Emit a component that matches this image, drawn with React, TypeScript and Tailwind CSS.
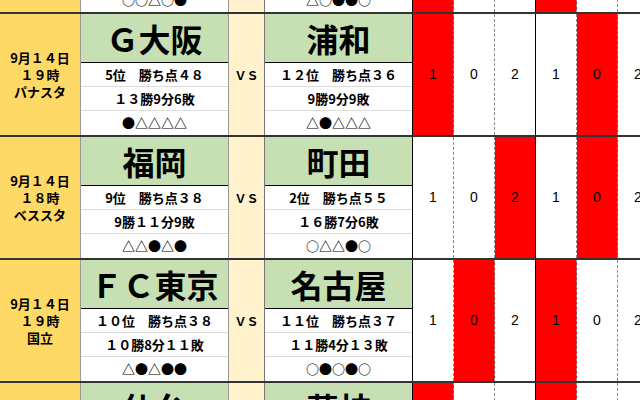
import React from 'react';

type Team = {
  name: string;
  rank: string;
  record: string;
  form: string;
};

type Match = {
  date: string[];
  home: Team;
  away: Team;
  reds: number[];
  scores: boolean;
};

const SCORES = ['1', '0', '2', '1', '0', '2'];

const MATCHES: Match[] = [
  {
    // only the last line of this row is still on screen
    date: [],
    home: { name: '', rank: '', record: '', form: '○○△○●' },
    away: { name: '', rank: '', record: '', form: '△○●●○' },
    reds: [0, 3],
    scores: false,
  },
  {
    date: ['9月１４日', '１９時', 'パナスタ'],
    home: { name: 'Ｇ大阪', rank: '5位　勝ち点４８', record: '１３勝9分6敗', form: '●△△△△' },
    away: { name: '浦和', rank: '１２位　勝ち点３６', record: '9勝9分9敗', form: '△●△△△' },
    reds: [0, 4],
    scores: true,
  },
  {
    date: ['9月１４日', '１８時', 'ベススタ'],
    home: { name: '福岡', rank: '9位　勝ち点３８', record: '9勝１１分9敗', form: '△△●△●' },
    away: { name: '町田', rank: '2位　勝ち点５５', record: '１６勝7分6敗', form: '○△△●○' },
    reds: [2, 4],
    scores: true,
  },
  {
    date: ['9月１４日', '１９時', '国立'],
    home: { name: 'ＦＣ東京', rank: '１０位　勝ち点３８', record: '１０勝8分１１敗', form: '△●△●●' },
    away: { name: '名古屋', rank: '１１位　勝ち点３７', record: '１１勝4分１３敗', form: '○●○●○' },
    reds: [1, 3],
    scores: true,
  },
  {
    date: [],
    home: { name: '仙台', rank: '', record: '', form: '' },
    away: { name: '藤枝', rank: '', record: '', form: '' },
    reds: [0, 3],
    scores: false,
  },
];

function TeamCell({ team, border }: { team: Team; border: string }) {
  return (
    <div className={`w-[148px] shrink-0 flex flex-col ${border}`}>
      {/* big team name on green */}
      <div className="h-[49px] bg-[#c6e0b4] border-b border-black flex items-center justify-center text-[32px] font-bold leading-none">
        {team.name}
      </div>
      <div className="h-[24px] bg-white border-b border-[#dcdcdc] flex items-center justify-center text-[13px] font-bold">
        {team.rank}
      </div>
      <div className="h-[24px] bg-white border-b border-[#dcdcdc] flex items-center justify-center text-[13px] font-bold">
        {team.record}
      </div>
      <div className="h-[23px] bg-white flex items-center justify-center text-[13px] font-bold">
        {team.form}
      </div>
    </div>
  );
}

function MatchRow({ m }: { m: Match }) {
  return (
    <div className="h-[123px] shrink-0 flex border-t-2 border-[#333333]">
      {/* date / time / venue */}
      <div className="w-[81px] shrink-0 bg-[#ffd966] border-r border-[#9a9a9a] flex flex-col items-center justify-center text-[13px] font-bold leading-[17px]">
        {m.date.map((d, i) => (
          <span key={i}>{d}</span>
        ))}
      </div>
      <TeamCell team={m.home} border="border-r border-[#9a9a9a]" />
      <div className="w-[36px] shrink-0 bg-[#fff2cc] border-r border-[#777777] flex items-center justify-center text-[12px] font-bold">
        {m.scores ? 'ＶＳ' : ''}
      </div>
      <TeamCell team={m.away} border="border-r border-black" />
      {/* score columns */}
      {SCORES.map((s, i) => (
        <div
          key={i}
          className={`w-[41px] shrink-0 flex items-center justify-center font-['Liberation_Sans',sans-serif] text-[14px] ${
            m.reds.includes(i) ? 'bg-[#ff0000]' : 'bg-white'
          } ${i === 2 ? 'border-r border-black' : 'border-r border-dashed border-[#8a8a8a]'}`}
        >
          {m.scores ? s : ''}
        </div>
      ))}
    </div>
  );
}

export default function App() {
  return (
    <div className="w-[640px] h-[400px] overflow-hidden bg-white text-black font-['Noto_Sans_CJK_JP',sans-serif]">
      <div className="flex flex-col mt-[-111px]">
        {MATCHES.map((m, i) => (
          <MatchRow key={i} m={m} />
        ))}
      </div>
    </div>
  );
}
